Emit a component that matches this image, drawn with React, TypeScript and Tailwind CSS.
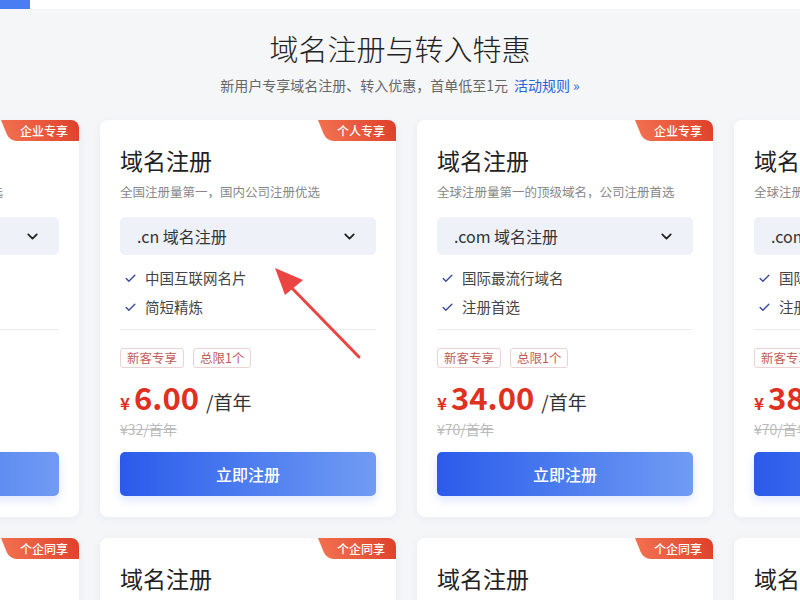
import React from 'react';
import { Check, ChevronDown } from 'lucide-react';

type Plan = {
    tag: string;
    desc: string;
    select: string;
    features: string[];
    price: string;
    oldPrice: string;
};

const topRow: Plan[] = [
    { tag: '企业专享', desc: '新一代通用顶级域名，企业注册首选', select: '.net 域名注册', features: ['企业品牌首选', '全球通用'], price: '38.00', oldPrice: '¥79/首年' },
    { tag: '个人专享', desc: '全国注册量第一，国内公司注册优选', select: '.cn 域名注册', features: ['中国互联网名片', '简短精炼'], price: '6.00', oldPrice: '¥32/首年' },
    { tag: '企业专享', desc: '全球注册量第一的顶级域名，公司注册首选', select: '.com 域名注册', features: ['国际最流行域名', '注册首选'], price: '34.00', oldPrice: '¥70/首年' },
    { tag: '个企同享', desc: '全球注册量第一的顶级域名，公司注册首选', select: '.com 域名注册', features: ['国际最流行域名', '注册首选'], price: '38.00', oldPrice: '¥70/首年' },
];

const bottomRow: Plan[] = topRow.map(p => ({ ...p, tag: '个企同享' }));

const CornerTag: React.FC<{ label: string }> = ({ label }) => (
    <div className="absolute top-0 right-0 h-[21px] w-[78px] overflow-hidden">
        <div className="absolute top-0 bottom-0 left-0 right-[-20px] origin-top skew-x-[22deg] rounded-bl-[7px] bg-linear-to-r from-[#f16f4e] to-[#d92e1e]" />
        <span className="relative flex h-full items-center justify-center pl-[8px] text-[12px] font-medium text-white">{label}</span>
    </div>
);

const PlanCard: React.FC<{ plan: Plan }> = ({ plan }) => (
    <div className="relative w-[296px] shrink-0 overflow-hidden rounded-[8px] bg-white px-[20px] pt-[25px] pb-[21px] shadow-[0_2px_10px_rgba(30,40,80,0.05)]">
        <CornerTag label={plan.tag} />
        <h3 className="text-[23px] leading-[30px] text-[#222]">域名注册</h3>
        <p className="mt-[8px] text-[12.5px] leading-[18px] text-[#888] whitespace-nowrap">{plan.desc}</p>
        <div className="mt-[16px] flex h-[38px] items-center justify-between rounded-[5px] bg-[#eff1f9] pl-[17px] pr-[18px]">
            <span className="text-[16px] text-[#333]">{plan.select}</span>
            <ChevronDown size={17} strokeWidth={2.6} className="text-[#222]" />
        </div>
        <ul className="mt-[12px] flex flex-col gap-[7px]">
            {plan.features.map(f => (
                <li key={f} className="flex h-[22px] items-center gap-[8px] pl-[4px] text-[14.5px] text-[#444]">
                    <Check size={13} strokeWidth={2.6} className="text-[#3a4a9c]" />
                    {f}
                </li>
            ))}
        </ul>
        <div className="mt-[11px] border-t border-[#ebebeb]" />
        <div className="mt-[18px] flex gap-[9px]">
            <span className="flex h-[20px] items-center rounded-[3px] border border-[#ecd2d2] px-[6px] text-[12.5px] text-[#bf5b58]">新客专享</span>
            <span className="flex h-[20px] items-center rounded-[3px] border border-[#ecd2d2] px-[6px] text-[12.5px] text-[#bf5b58]">总限1个</span>
        </div>
        <div className="mt-[9px] flex h-[40px] items-baseline">
            <span className="text-[17px] font-bold text-[#e0301f]">¥</span>
            <span className="ml-[4px] text-[31px] leading-[40px] font-bold text-[#e0301f]">{plan.price}</span>
            <span className="ml-[7px] text-[19px] text-[#333]">/首年</span>
        </div>
        <p className="mt-[3px] text-[14px] leading-[18px] text-[#bbb] line-through">{plan.oldPrice}</p>
        <button className="mt-[14px] flex h-[44px] w-full items-center justify-center rounded-[5px] bg-linear-to-r from-[#2b5aea] to-[#719bf3] text-[16px] font-medium text-white shadow-[0_4px_10px_rgba(43,90,234,0.15)]">
            立即注册
        </button>
    </div>
);

const App: React.FC = () => {
    return (
        <div className="relative h-[600px] w-full overflow-hidden bg-[#f5f6f8] font-['Noto_Sans_CJK_SC','Noto_Sans',sans-serif]">
            <div className="h-[9px] bg-white">
                <div className="h-full w-[30px] bg-[#4a7cf2]" />
            </div>

            <div className="pt-[21px] text-center">
                <h1 className="text-[29px] leading-[36px] font-light text-[#222]">域名注册与转入特惠</h1>
                <p className="mt-[9px] text-[14px] leading-[20px] text-[#666]">
                    新用户专享域名注册、转入优惠，首单低至1元
                    <a className="ml-[6px] text-[#2a62d8]">活动规则 »</a>
                </p>
            </div>

            <div className="mt-[25px] ml-[-217px] flex flex-col gap-[21px]">
                <div className="flex gap-[21px]">
                    {topRow.map((p, i) => <PlanCard key={i} plan={p} />)}
                </div>
                <div className="flex gap-[21px]">
                    {bottomRow.map((p, i) => <PlanCard key={i} plan={p} />)}
                </div>
            </div>

            {/* annotation arrow */}
            <svg className="pointer-events-none absolute inset-0" width="800" height="600">
                <line x1="359" y1="357" x2="287" y2="283" stroke="#ea4542" strokeWidth="3" strokeLinecap="round" />
                <polygon points="275,268 303,280 285,295" fill="#ea4542" />
            </svg>
        </div>
    );
};

export default App;
